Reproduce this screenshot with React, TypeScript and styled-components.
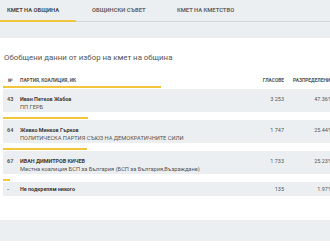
import React from 'react';
import styled, { createGlobalStyle } from 'styled-components';

const GlobalStyle = createGlobalStyle`
  html, body {
    margin: 0;
    padding: 0;
    overflow: hidden;
    background: #fff;
    font-family: Roboto, "Noto Sans", sans-serif;
  }
`;

const Page = styled.div`
  width: 336px;
`;

const TabBar = styled.div`
  display: flex;
  gap: 9px;
  height: 21px;
  background: #eceff1;
  border-bottom: 1px solid #d3d7da;
`;

const Tab = styled.div<{ $active?: boolean }>`
  width: 76px;
  box-sizing: border-box;
  padding-left: 7px;
  display: flex;
  align-items: center;
  white-space: nowrap;
  font-size: 5.8px;
  font-weight: 700;
  text-transform: uppercase;
  color: ${(p) => (p.$active ? '#4a4a4a' : '#666')};
  border-bottom: 2px solid ${(p) => (p.$active ? '#f3c53c' : 'transparent')};
  margin-bottom: -1px;
`;

const SubBar = styled.div`
  height: 16px;
  background: #eceff1;
`;

const Title = styled.h2`
  margin: 0;
  padding: 15px 0 0 4px;
  font-size: 7.85px;
  line-height: 10px;
  font-weight: 400;
  color: #555;
`;

const Grid = styled.div`
  display: grid;
  grid-template-columns: 13px 1fr 48px 48px;
  padding: 0 4px;
`;

const HeadRow = styled(Grid)`
  margin: 13px 0 0 3px;
  height: 8px;
  align-items: center;
  font-size: 4.8px;
  font-weight: 700;
  color: #555;
  text-transform: uppercase;
  white-space: nowrap;
  & > span:nth-child(1) { padding-left: 1px; }
  & > span:nth-child(3) { text-align: right; }
  & > span:nth-child(4) { padding-left: 9px; }
`;

const Rows = styled.div`
  margin-top: 2px;
`;

const Entry = styled.div`
  margin-bottom: 5px;
`;

const Bar = styled.div`
  height: 2px;
  margin-left: 3px;
  background: #f3c53c;
  margin-bottom: 1px;
`;

const Row = styled(Grid)<{ $single?: boolean }>`
  margin-left: 3px;
  background: #eceff1;
  padding-top: ${(p) => (p.$single ? 3 : 6)}px;
  padding-bottom: ${(p) => (p.$single ? 3 : 1)}px;
`;

const Cell = styled.div`
  font-size: 5.5px;
  line-height: 8px;
  color: #555;
`;

const Num = styled(Cell)`
  font-weight: 700;
`;

const Name = styled.div`
  font-size: 5.4px;
  line-height: 8px;
  font-weight: 700;
  color: #3a3a3a;
`;

const Party = styled.div`
  font-size: 5.7px;
  line-height: 8px;
  color: #555;
  white-space: nowrap;
`;

const Value = styled(Cell)`
  text-align: right;
`;

const Footer = styled.div`
  margin-top: 24px;
  height: 21px;
  background: #eceff1;
`;

const rows = [
  { n: '43', name: 'Иван Петков Жабов', party: 'ПП ГЕРБ', votes: '3 253', pct: 47.36 },
  { n: '64', name: 'Живко Минков Гърков', party: 'ПОЛИТИЧЕСКА ПАРТИЯ СЪЮЗ НА ДЕМОКРАТИЧНИТЕ СИЛИ', votes: '1 747', pct: 25.44 },
  { n: '67', name: 'ИВАН ДИМИТРОВ КИЧЕВ', party: 'Местна коалиция БСП за България (БСП за България,Възраждане)', votes: '1 733', pct: 25.23 },
  { n: '-', name: 'Не подкрепям никого', party: '', votes: '135', pct: 1.97 },
];

export default function App() {
  return (
    <Page>
      <GlobalStyle />
      <TabBar>
        <Tab $active>Кмет на община</Tab>
        <Tab>Общински съвет</Tab>
        <Tab>Кмет на кметство</Tab>
      </TabBar>
      <SubBar />
      <Title>Обобщени данни от избор на кмет на община</Title>
      <HeadRow>
        <span>№</span>
        <span>Партия, коалиция, ИК</span>
        <span>Гласове</span>
        <span>Разпределение</span>
      </HeadRow>
      <Rows>
        {rows.map((r) => (
          <Entry key={r.n}>
            <Bar style={{ width: `${(r.pct / 100) * 333}px` }} />
            <Row $single={!r.party}>
              <Num>{r.n}</Num>
              <div>
                <Name>{r.name}</Name>
                {r.party && <Party>{r.party}</Party>}
              </div>
              <Value>{r.votes}</Value>
              <Value>{r.pct.toFixed(2)}%</Value>
            </Row>
          </Entry>
        ))}
      </Rows>
      <Footer />
    </Page>
  );
}
